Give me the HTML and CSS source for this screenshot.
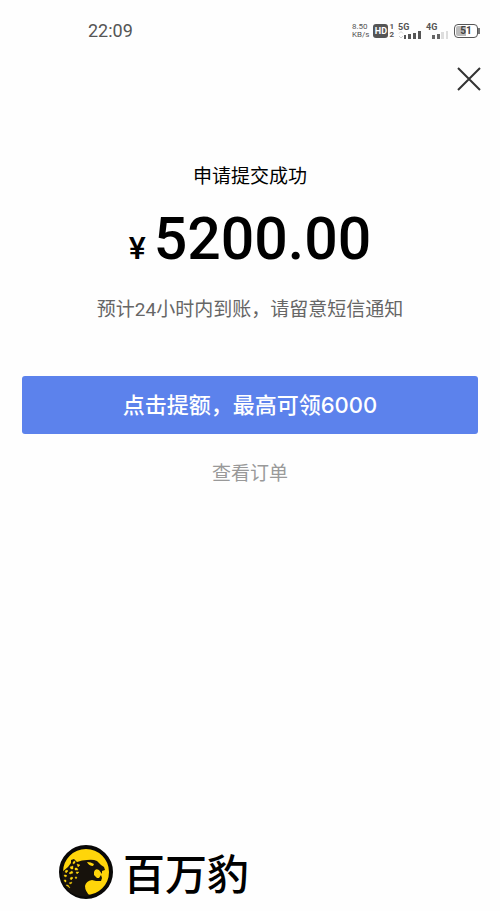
FILE: index.html
```html
<!DOCTYPE html>
<html lang="zh-CN">
<head>
<meta charset="UTF-8">
<meta name="viewport" content="width=device-width, initial-scale=1">
<title>申请提交成功</title>
<link rel="stylesheet" href="styles.css">
</head>
<body>
<header class="status">
  <time class="clock">22:09</time>
  <div class="indicators">
    <div class="speed"><span>8.50</span><span>KB/s</span></div>
    <div class="volte"><span class="hd">HD</span><span class="sims"><span>1</span><span>2</span></span></div>
    <div class="signal">
      <span>5G</span>
      <svg width="23" height="8" viewBox="0 0 23 8" aria-hidden="true"><path d="M1 2.5 3 .5l2 2M1 5l2 2 2-2" fill="none" stroke="#ccc"/><path d="M6 4h2v4H6zM10 3h3v5h-3zM15 2h3v6h-3zM20 0h3v8h-3z" fill="#555"/></svg>
    </div>
    <div class="signal">
      <span>4G</span>
      <svg width="23" height="8" viewBox="0 0 23 8" aria-hidden="true"><path d="M6 4h3v4H6zM11 3h3v5h-3z" fill="#666"/><path d="M15 1h3v7h-3zM20 0h2v8h-2z" fill="#ddd"/></svg>
    </div>
    <div class="battery"><span>51</span></div>
  </div>
</header>
<nav class="toolbar">
  <button class="close" type="button" aria-label="关闭">
    <svg width="24" height="24" viewBox="0 0 24 24" aria-hidden="true"><path d="m1 1 22 22M23 1 1 23" fill="none" stroke="#333" stroke-width="2"/></svg>
  </button>
</nav>
<main class="result">
  <h1 class="title">申请提交成功</h1>
  <p class="amount"><span class="currency">¥</span><span>5200.00</span></p>
  <p class="note">预计24小时内到账，请留意短信通知</p>
  <button class="primary" type="button">点击提额，最高可领6000</button>
  <a class="orders" href="#">查看订单</a>
</main>
<footer class="brand">
  <svg width="54" height="54" viewBox="0 0 54 54" aria-hidden="true">
    <circle cx="27" cy="27" r="25" fill="#ffd50a" stroke="#090807" stroke-width="4"/>
    <path d="M3 27 9 22 12 18 12 15 15 14 18 17Q23 15 28 15 34 14 38 16L42 20 45 22 46 25 43 26 43 29 40 25Q36 23 35 27L35 30 38 33 40 33 42 30 43 33 42 36 37 36 33 35Q27 36 26 41 26 46 31 51C16 54 2 44 3 27z" fill="#17120c"/>
    <path d="M28 17Q32 17 35 19L34 21Q30 21 28 17z" fill="#ffd50a"/>
    <path d="m14 17 2-1 0 2-2 1zM18 19l3 1-2 2zM11 22l3-1 0 3-2 0zM16 23l2 0 1 2-3 0zM6 26l2-1 1 1-2 2zM10 28l3-2 1 2-3 1zM17 27l3 0-2 2zM5 30l2 0 1 1-2 1zM11 33l2-1 1 1-2 2zM16 32l2 0-1 2zM5 35l2 0 0 2-1 0zM10 38l3-1-1 2zM7 40l2 0 2 3z" fill="#ffd50a" stroke="#ffd50a" stroke-width=".4"/>
  </svg>
  <span>百万豹</span>
</footer>
</body>
</html>
```
FILE: styles.css
```css
* { box-sizing: border-box; }
body {
  min-height: 100vh;
  margin: 0;
  display: flex;
  flex-direction: column;
  background: #fefefe;
  color: #000;
  font-family: Roboto, "Noto Sans CJK SC", sans-serif;
}
h1, p { margin: 0; }
button { border: 0; cursor: pointer; font-family: inherit; }
.status {
  height: 60px;
  padding: 2px 22px 0 88px;
  display: flex;
  align-items: center;
  justify-content: space-between;
  color: #555;
}
.clock { font-size: 18px; line-height: 24px; }
.indicators { display: flex; align-items: center; gap: 4px; }
.speed {
  display: flex;
  flex-direction: column;
  font: 8px/8px Roboto, sans-serif;
}
.volte { display: flex; align-items: center; gap: 1px; }
.hd {
  width: 15px;
  border-radius: 3px;
  background: #555;
  color: #fff;
  font: bold 9px/14px Roboto, sans-serif;
  text-align: center;
}
.sims { display: flex; flex-direction: column; font: bold 8px/8px Roboto, sans-serif; }
.signal {
  width: 24px;
  display: flex;
  flex-direction: column;
  font: bold 9px/8px Roboto, sans-serif;
}
.signal svg { display: block; }
.battery {
  position: relative;
  width: 24px;
  border: 1px solid #555;
  border-radius: 4px;
  background: linear-gradient(90deg, #bbb 50%, #fff 50%) content-box;
  padding: 1px;
  color: #444;
  font: bold 10px/10px Roboto, sans-serif;
  text-align: center;
}
.battery::after {
  content: "";
  position: absolute;
  top: 3px;
  right: -3px;
  width: 2px;
  height: 6px;
  background: #777;
}
.toolbar { display: flex; justify-content: flex-end; padding: 0 12px; }
.close { padding: 7px; background: none; }
.close svg { display: block; }
.result {
  flex: 1;
  display: flex;
  flex-direction: column;
  align-items: center;
  padding: 65px 22px 40px;
}
.title { font-size: 19px; line-height: 28px; font-weight: 400; }
.amount {
  margin-top: 12px;
  display: flex;
  align-items: baseline;
  gap: 8px;
  font-size: 59px;
  line-height: 72px;
  font-weight: 500;
}
.currency { font-size: 32px; }
.note { margin-top: 12px; color: #666; font-size: 19px; line-height: 28px; }
.primary {
  align-self: stretch;
  margin-top: 52px;
  padding: 14px;
  border-radius: 3px;
  background: #5c82ec;
  color: #fff;
  font-family: Inter, "Noto Sans CJK SC", sans-serif;
  font-size: 22px;
  line-height: 30px;
  font-weight: 500;
}
.orders {
  margin-top: 26px;
  color: #999;
  font-size: 19px;
  line-height: 28px;
  text-decoration: none;
}
.brand {
  display: flex;
  align-items: center;
  gap: 10px;
  padding: 0 59px 12px;
  font-family: "Noto Sans CJK SC", sans-serif;
  font-size: 42px;
  line-height: 54px;
  font-weight: 500;
}
```
